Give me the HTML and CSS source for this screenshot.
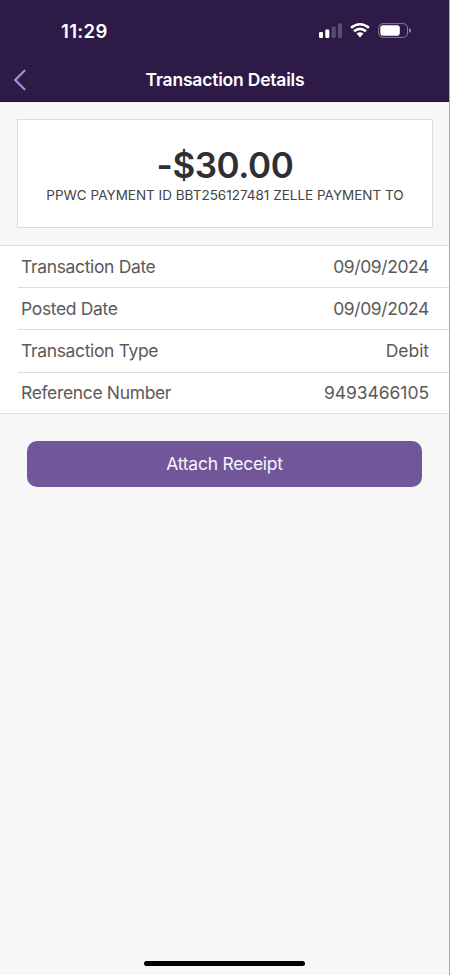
FILE: index.html
```html
<!DOCTYPE html>
<html lang="en">
<head>
<meta charset="utf-8">
<title>Transaction Details</title>
<link rel="stylesheet" href="styles.css">
</head>
<body>
<div class="screen">
  <header class="header">
    <div class="status">
      <span class="time">11:29</span>
      <svg class="indicators" width="94" height="18" viewBox="0 0 94 18">
        <g fill="#fff">
          <rect x="1" y="10" width="4" height="6" rx="1.2"/>
          <rect x="7.3" y="7.5" width="4" height="8.5" rx="1.2"/>
          <g opacity=".22">
            <rect x="13.7" y="4.5" width="4" height="11.5" rx="1.2"/>
            <rect x="20" y="1.2" width="4" height="14.8" rx="1.2"/>
          </g>
          <path d="M38.5 11.6 Q42 9 45.5 11.6 L42 15.4 Z"/>
        </g>
        <g fill="none" stroke="#fff" stroke-width="2.6">
          <path d="M33 5.8 Q42 -1.3 51 5.8"/>
          <path d="M36 9.2 Q42 4.4 48 9.2"/>
        </g>
        <rect x="60.7" y="1.6" width="28.8" height="13.8" rx="4.2" fill="none" stroke="#fff" stroke-opacity=".42"/>
        <rect x="62.3" y="3.3" width="19.5" height="10.4" rx="2.8" fill="#fff"/>
        <path d="M91 6 Q93 7 93 8.5 Q93 10 91 11 Z" fill="#fff" fill-opacity=".5"/>
      </svg>
    </div>
    <div class="nav">
      <svg class="back" width="14" height="22" viewBox="0 0 14 22"><path d="M11.5 1.8 L2.2 11 L11.5 20.2" fill="none" stroke="#9b91dc" stroke-width="2.3" stroke-linecap="round" stroke-linejoin="round"/></svg>
      <h1 class="title">Transaction Details</h1>
    </div>
  </header>
  <main>
    <section class="card">
      <div class="amount">-$30.00</div>
      <div class="memo">PPWC PAYMENT ID BBT256127481 ZELLE PAYMENT TO</div>
    </section>
    <dl class="details">
      <div class="row"><dt>Transaction Date</dt><dd class="date">09/09/2024</dd></div>
      <div class="row"><dt>Posted Date</dt><dd class="date">09/09/2024</dd></div>
      <div class="row"><dt>Transaction Type</dt><dd>Debit</dd></div>
      <div class="row"><dt>Reference Number</dt><dd>9493466105</dd></div>
    </dl>
    <button class="attach">Attach Receipt</button>
  </main>
  <div class="home"></div>
</div>
</body>
</html>
```
FILE: styles.css
```css
* { box-sizing: border-box; }
body { margin: 0; font-family: Inter, "Liberation Sans", sans-serif; background: #f7f7f7; }
.screen {
  width: 450px; height: 975px; display: flex; flex-direction: column;
  background: #f7f7f7; border-right: 1px solid #aaa; overflow: hidden;
}
.header { height: 102px; flex: none; background: #2e1a47; border-bottom: 1px solid #210f38; color: #fff; margin-right: -1px; }
.status { height: 58px; padding: 0 38px 0 61px; display: flex; justify-content: space-between; }
.time { margin-top: 19px; line-height: 24px; font-size: 18.5px; font-weight: 600; letter-spacing: 0.35px; }
.indicators { margin-top: 22px; }
.nav { height: 43px; display: grid; grid-template-columns: 34px 1fr 34px; align-items: center; }
.back { margin-left: 13px; }
.title { margin: 0; text-align: center; font-size: 17.5px; line-height: 24px; font-weight: 600; letter-spacing: -0.2px; }
main { flex: 1; display: flex; flex-direction: column; }
.card {
  margin: 17px 16px 0 17px; height: 109px; padding-top: 24px;
  background: #fff; border: 1px solid #dcdcdc; text-align: center; white-space: nowrap;
}
.amount { font-size: 35px; line-height: 42px; font-weight: 600; color: #303034; letter-spacing: -0.4px; }
.memo { margin-top: 1px; font-size: 13.5px; line-height: 17px; color: #444; }
.details { margin: 17px 0 0; background: #fff; border-top: 1px solid #dcdcdc; border-bottom: 1px solid #dcdcdc; height: 169px; }
.row {
  height: 42.2px; margin-left: 18px; padding: 0 20px 0 3px; display: flex;
  justify-content: space-between; align-items: center; border-bottom: 1px solid #dcdcdc;
  font-size: 17.5px; color: #5a5a5a;
}
.row:last-child { border-bottom: 0; height: 40px; }
dt { letter-spacing: -0.35px; }
dd { margin: 0; letter-spacing: -0.05px; }
.date { letter-spacing: -0.4px; }
.attach {
  margin: 27px 27px 0; height: 46px; border: 0; border-radius: 10px; padding: 0;
  background: #72569a; color: #f8f4fc; font: 400 17.5px/46px Inter, "Liberation Sans", sans-serif; letter-spacing: -0.25px;
}
.home { width: 161px; height: 5px; border-radius: 3px; background: #000; margin: 0 0 9px 144px; }
```
